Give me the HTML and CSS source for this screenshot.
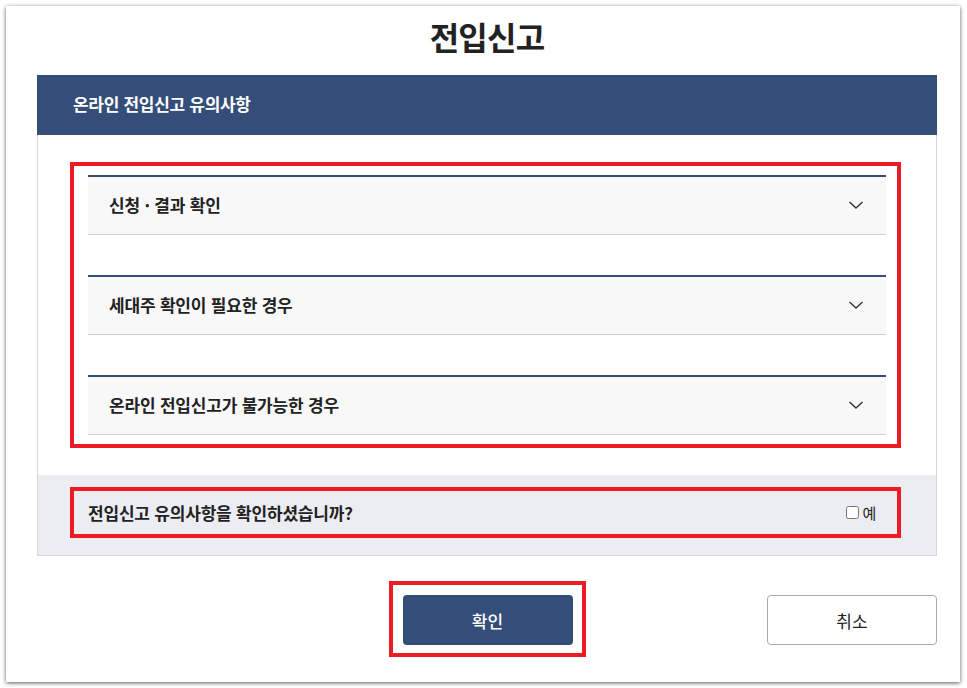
FILE: index.html
```html
<!DOCTYPE html>
<html lang="ko">
<head>
  <meta charset="UTF-8" />
  <title>전입신고</title>
  <link rel="stylesheet" href="styles.css">
</head>
<body>

<div class="window">
  <h1 class="title">전입신고</h1>

  <div class="notice">
    <div class="notice-head">온라인 전입신고 유의사항</div>

    <div class="notice-body">
      <div class="mark list-mark">
        <div class="acc-item">
          <span>신청 · 결과 확인</span>
          <svg class="chev" width="16" height="10" viewBox="0 0 16 10"><path d="M1.5 2 L8 8 L14.5 2" fill="none" stroke="#333" stroke-width="1.4"/></svg>
        </div>
        <div class="acc-item">
          <span>세대주 확인이 필요한 경우</span>
          <svg class="chev" width="16" height="10" viewBox="0 0 16 10"><path d="M1.5 2 L8 8 L14.5 2" fill="none" stroke="#333" stroke-width="1.4"/></svg>
        </div>
        <div class="acc-item">
          <span>온라인 전입신고가 불가능한 경우</span>
          <svg class="chev" width="16" height="10" viewBox="0 0 16 10"><path d="M1.5 2 L8 8 L14.5 2" fill="none" stroke="#333" stroke-width="1.4"/></svg>
        </div>
      </div>
    </div>

    <div class="confirm-row">
      <div class="mark confirm-mark">
        <span>전입신고 유의사항을 확인하셨습니까?</span>
        <label class="check"><input type="checkbox"> 예</label>
      </div>
    </div>
  </div>

  <div class="actions">
    <div class="mark btn-mark">
      <button class="btn btn-primary">확인</button>
    </div>
    <button class="btn btn-cancel">취소</button>
  </div>
</div>

</body>
</html>
```

FILE: styles.css
```css
body {
  margin: 0;
  background: #fff;
  font-family: "Noto Sans CJK KR", "Noto Sans", sans-serif;
  color: #222;
}

.window {
  margin: 6px;
  width: 954px;
  height: 676px;
  box-sizing: border-box;
  padding: 0 23px 0 31px;
  background: #fff;
  box-shadow: 0 1px 4px rgba(0,0,0,0.65);
}

.title {
  margin: 0;
  height: 69px;
  line-height: 60px;
  text-align: center;
  font-size: 32px;
  font-weight: 700;
  color: #222;
  letter-spacing: -0.8px;
}

.notice-head {
  height: 60px;
  line-height: 58px;
  padding-left: 36px;
  background: #344d79;
  color: #fff;
  font-size: 17px;
  font-weight: 700;
  letter-spacing: -0.3px;
}

.notice-body {
  border-left: 1px solid #d6d6d6;
  border-right: 1px solid #d6d6d6;
  padding: 27px 35px 27px 32px;
}

.confirm-row {
  background: #ecedf3;
  border: 1px solid #d6d6d6;
  border-top: none;
  padding: 12px 35px 17px 32px;
}

.mark {
  border: 4px solid #ed1c24;
}

.list-mark {
  padding: 9px 11px 9px 14px;
  display: flex;
  flex-direction: column;
  gap: 40px;
}

.acc-item {
  height: 60px;
  box-sizing: border-box;
  border-top: 2px solid #344d79;
  border-bottom: 1px solid #cfcfcf;
  background: #f8f8f8;
  display: flex;
  align-items: center;
  justify-content: space-between;
  padding: 0 22px 2px 21px;
  font-size: 17px;
  font-weight: 700;
  letter-spacing: -0.2px;
  color: #222;
}

.chev {
  display: block;
}

.confirm-mark {
  height: 43px;
  display: flex;
  align-items: center;
  justify-content: space-between;
  padding: 0 21px 0 14px;
  font-size: 17px;
  font-weight: 700;
  letter-spacing: -0.2px;
}

.check {
  display: flex;
  align-items: center;
  font-size: 15px;
  font-weight: 400;
}

.check input {
  margin: 0 3px 0 0;
  width: 13px;
  height: 13px;
}

.actions {
  display: grid;
  grid-template-columns: 1fr auto 1fr;
  align-items: center;
  margin-top: 25px;
}

.btn-mark {
  grid-column: 2;
  padding: 10px 9px 8px 10px;
}

.btn {
  width: 170px;
  height: 50px;
  border-radius: 4px;
  font-family: inherit;
  font-size: 17px;
  cursor: pointer;
  display: block;
}

.btn-primary {
  background: #344d79;
  color: #fff;
  border: none;
  font-weight: 500;
}

.btn-cancel {
  grid-column: 3;
  justify-self: end;
  margin-top: 2px;
  background: #fff;
  color: #222;
  border: 1px solid #aaa;
}
```
